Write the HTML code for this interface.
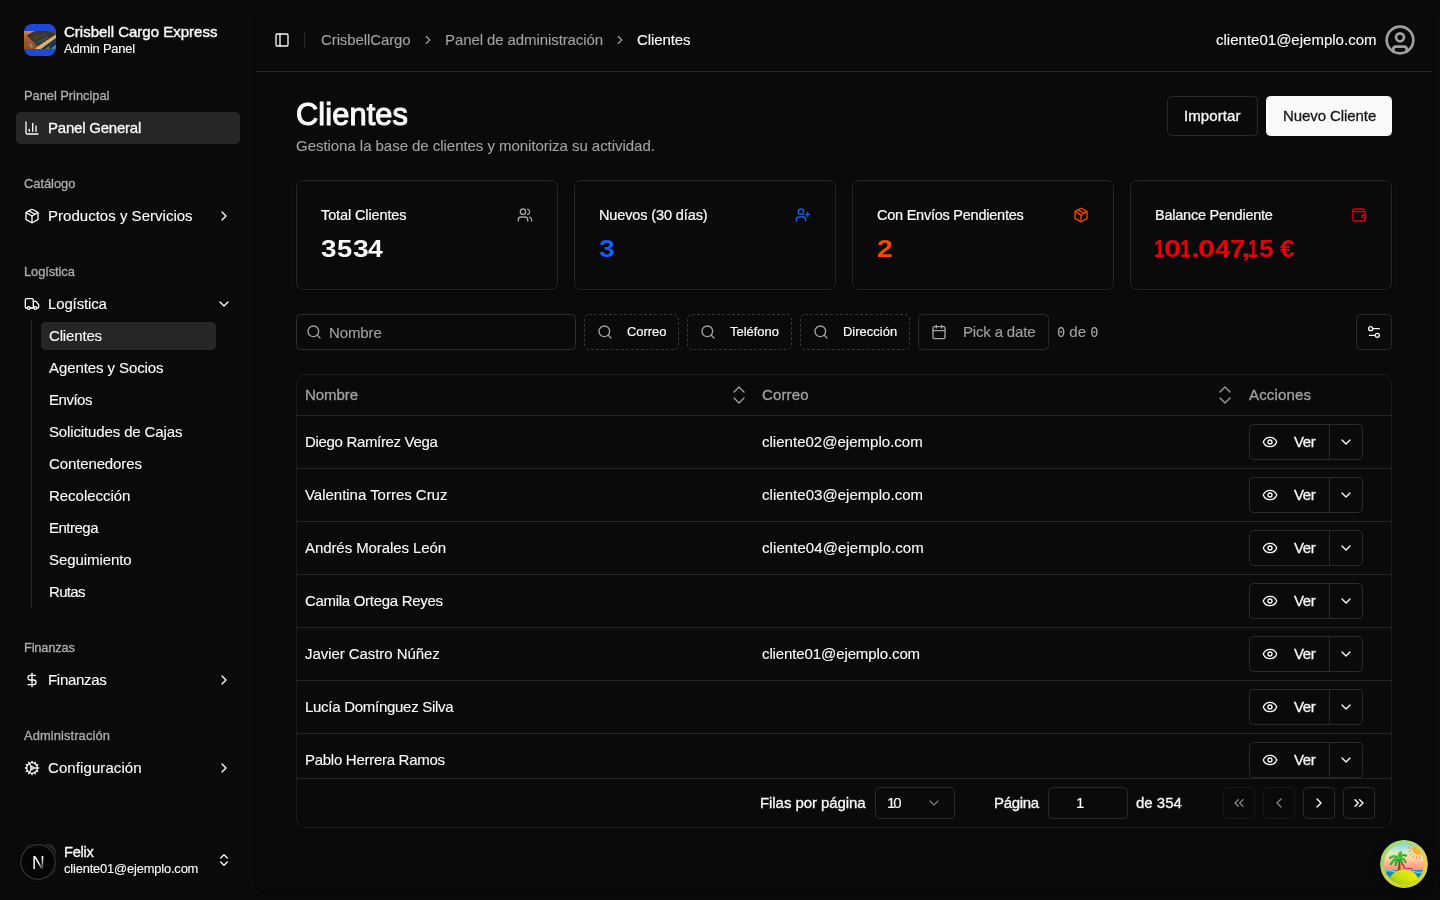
<!DOCTYPE html>
<html lang="es">
<head>
<meta charset="utf-8">
<title>Clientes - Crisbell Cargo Express</title>
<style>
*{box-sizing:border-box;margin:0;padding:0}
html,body{width:1440px;height:900px;overflow:hidden;background:#0a0a0a;color:#fafafa;
  font-family:"Liberation Sans",sans-serif;font-size:15px}
.abs{position:absolute}
.t{position:absolute;white-space:nowrap;line-height:20px;height:20px;will-change:transform;-webkit-text-stroke:.12px}
svg.i{position:absolute;fill:none;stroke:currentColor;stroke-width:2;stroke-linecap:round;stroke-linejoin:round}
#sb{position:absolute;left:0;top:0;width:256px;height:900px;background:#0a0a0a}
.lbl{font-size:12.9px;-webkit-text-stroke:.3px;color:#adadad;left:24px;letter-spacing:0.1px;line-height:16px;height:16px;margin-top:3px}
.it{font-size:15px;left:48px;color:#fafafa;letter-spacing:0.42px}
.sub{font-size:15px;left:49px;color:#fafafa;letter-spacing:0.42px}
#main{position:absolute;left:256px;top:8px;width:1176px;height:884px;background:#0a0a0a;border-radius:11px;
  box-shadow:0 1px 3px rgba(0,0,0,.6),0 0 0 1px rgba(255,255,255,.012)}
.mut{color:#a1a1a1}
.mono{font-family:"DejaVu Sans Mono","Liberation Mono",monospace;font-size:13.6px}
.card{position:absolute;top:180px;width:262px;height:110px;border:1px solid #252525;border-radius:6.400px;background:#0a0a0a;box-shadow:0 1px 2px rgba(0,0,0,.5)}
.btn{position:absolute;border:1px solid #2a2a2a;border-radius:4.500px;background:#0a0a0a}
.dash{border-style:dashed;border-color:#333}
.md{-webkit-text-stroke:.3px;letter-spacing:.4px}
.cv{position:absolute;white-space:nowrap;font-size:24.3px;font-weight:bold;line-height:32px;height:32px;will-change:transform}
.sbd{-webkit-text-stroke:.42px}
</style>
</head>
<body>
<div id="sb"></div>
<div id="main"></div>
<svg class="abs" style="left:24px;top:24px;width:32px;height:32px" viewBox="0 0 32 32">
<defs><clipPath id="lg"><rect width="32" height="32" rx="8"/></clipPath>
<linearGradient id="ph" x1="0" y1="0" x2="0" y2="1"><stop offset="0" stop-color="#c88a4e"/><stop offset=".4" stop-color="#a8602c"/><stop offset="1" stop-color="#8c4a1e"/></linearGradient>
<pattern id="gr" width="2.200" height="2.200" patternUnits="userSpaceOnUse" patternTransform="rotate(32)"><rect width="2.200" height="2.200" fill="#2b2520"/><rect width="1.100" height="1" fill="#46504a"/><rect x="1.100" y="1.100" width="1" height=".8" fill="#6a4a38"/></pattern></defs>
<g clip-path="url(#lg)"><rect width="32" height="32" fill="#1f48d9"/>
<rect y="7" width="32" height="18" fill="url(#ph)"/>
<polygon points="2.700,11.500 10.700,7 32,7 32,11 14,22.400" fill="url(#gr)"/>
<polygon points="8,13 20,8.500 24,10 12,16" fill="#3f6a5c" opacity=".25"/>
<polygon points="13,17.500 23,12.500 25,14 15,19.500" fill="#4f8a78" opacity=".25"/>
<polygon points="24,7 32,7 32,10.500" fill="#7a4528" opacity=".8"/>
<polygon points="11,25 17,25 32,14 32,10.600 14,22.300" fill="#dcae78"/>
<polygon points="17,25 32,14 32,25" fill="#17364f"/>
<polygon points="26.500,25 32,20.500 32,25" fill="#4a7f90"/>
<polygon points="21,25 25,22 26,25" fill="#6a6a45"/>
<polygon points="4.500,20 7,19.500 9,23 7.500,24" fill="#5fa08f"/>
</g></svg>
<div class="t sbd" style="left:64px;top:22px;font-size:15px;;letter-spacing:0.00px">Crisbell Cargo Express</div>
<div class="t " style="left:64px;top:41px;font-size:12.9px;line-height:16px;height:16px;;letter-spacing:-0.20px">Admin Panel</div>
<div class="t lbl" style="top:85px;;letter-spacing:-0.04px">Panel Principal</div>
<div class="abs" style="left:16px;top:112px;width:224px;height:32px;border-radius:4.500px;background:#262626"></div>
<svg class="i" viewBox="0 0 24 24" style="left:24px;top:120px;width:16px;height:16px;"><path d="M3 3v16a2 2 0 0 0 2 2h16"/><path d="M18 17V9"/><path d="M13 17V5"/><path d="M8 17v-3"/></svg>
<div class="t it md" style="top:118px;;letter-spacing:-0.22px">Panel General</div>
<div class="t lbl" style="top:173px;;letter-spacing:-0.04px">Catálogo</div>
<svg class="i" viewBox="0 0 24 24" style="left:24px;top:208px;width:16px;height:16px;"><path d="M11 21.73a2 2 0 0 0 2 0l7-4A2 2 0 0 0 21 16V8a2 2 0 0 0-1-1.73l-7-4a2 2 0 0 0-2 0l-7 4A2 2 0 0 0 3 8v8a2 2 0 0 0 1 1.73z"/><path d="M12 22V12"/><path d="M3.29 7 12 12l8.71-5"/><path d="m7.5 4.27 9 5.15"/></svg>
<div class="t it" style="top:206px;;letter-spacing:0.02px">Productos y Servicios</div>
<svg class="i" viewBox="0 0 24 24" style="left:216px;top:208px;width:16px;height:16px;"><path d="m9 18 6-6-6-6"/></svg>
<div class="t lbl" style="top:261px;;letter-spacing:-0.09px">Logística</div>
<svg class="i" viewBox="0 0 24 24" style="left:24px;top:296px;width:16px;height:16px;"><path d="M14 18V6a2 2 0 0 0-2-2H4a2 2 0 0 0-2 2v11a1 1 0 0 0 1 1h2"/><path d="M15 18H9"/><path d="M19 18h2a1 1 0 0 0 1-1v-3.65a1 1 0 0 0-.22-.624l-3.48-4.35A1 1 0 0 0 17.52 8H14"/><circle cx="17" cy="18" r="2"/><circle cx="7" cy="18" r="2"/></svg>
<div class="t it" style="top:294px;;letter-spacing:-0.14px">Logística</div>
<svg class="i" viewBox="0 0 24 24" style="left:216px;top:296px;width:16px;height:16px;"><path d="m6 9 6 6 6-6"/></svg>
<div class="abs" style="left:31px;top:320px;width:1px;height:288px;background:#262626"></div>
<div class="abs" style="left:41px;top:322px;width:175px;height:28px;border-radius:4.500px;background:#262626"></div>
<div class="t sub" style="top:326px;;letter-spacing:-0.16px">Clientes</div>
<div class="t sub" style="top:358px;;letter-spacing:-0.09px">Agentes y Socios</div>
<div class="t sub" style="top:390px;;letter-spacing:-0.48px">Envíos</div>
<div class="t sub" style="top:422px;;letter-spacing:-0.13px">Solicitudes de Cajas</div>
<div class="t sub" style="top:454px;;letter-spacing:-0.12px">Contenedores</div>
<div class="t sub" style="top:486px;;letter-spacing:-0.03px">Recolección</div>
<div class="t sub" style="top:518px;;letter-spacing:-0.50px">Entrega</div>
<div class="t sub" style="top:550px;;letter-spacing:-0.08px">Seguimiento</div>
<div class="t sub" style="top:582px;;letter-spacing:-0.69px">Rutas</div>
<div class="t lbl" style="top:637px;;letter-spacing:-0.20px">Finanzas</div>
<svg class="i" viewBox="0 0 24 24" style="left:24px;top:672px;width:16px;height:16px;"><path d="M12 2v20"/><path d="M17 5H9.5a3.5 3.5 0 0 0 0 7h5a3.5 3.5 0 0 1 0 7H6"/></svg>
<div class="t it" style="top:670px;;letter-spacing:-0.29px">Finanzas</div>
<svg class="i" viewBox="0 0 24 24" style="left:216px;top:672px;width:16px;height:16px;"><path d="m9 18 6-6-6-6"/></svg>
<div class="t lbl" style="top:725px;;letter-spacing:0.10px">Administración</div>
<svg class="i" viewBox="0 0 24 24" style="left:24px;top:760px;width:16px;height:16px;"><path d="M12 20a8 8 0 1 0 0-16 8 8 0 0 0 0 16Z"/><path d="M12 14a2 2 0 1 0 0-4 2 2 0 0 0 0 4Z"/><path d="M12 2v2"/><path d="M12 22v-2"/><path d="m17 20.66-1-1.73"/><path d="M11 10.27 7 3.34"/><path d="m20.66 17-1.73-1"/><path d="m3.34 7 1.73 1"/><path d="M14 12h8"/><path d="M2 12h2"/><path d="m20.66 7-1.73 1"/><path d="m3.34 17 1.73-1"/><path d="m17 3.34-1 1.73"/><path d="m11 13.73-4 6.93"/></svg>
<div class="t it" style="top:758px;;letter-spacing:0.09px">Configuración</div>
<svg class="i" viewBox="0 0 24 24" style="left:216px;top:760px;width:16px;height:16px;"><path d="m9 18 6-6-6-6"/></svg>
<div class="abs" style="left:24px;top:844px;width:32px;height:32px;border-radius:8px;background:#262626"></div>
<div class="abs" style="left:20px;top:844px;width:36px;height:36px;border-radius:50%;background:#050505;box-shadow:inset 0 0 0 1.500px #2e2e2e,0 0 0 1px rgba(0,0,0,.6)"></div>
<div class="t " style="left:31.5px;top:852.5px;font-size:17.5px;letter-spacing:0;background:linear-gradient(125deg,#fff 50%,rgba(255,255,255,.1) 82%);-webkit-background-clip:text;background-clip:text;color:transparent">N</div>
<div class="t sbd" style="left:64px;top:842px;font-size:14.6px;-webkit-text-stroke-width:.33px;;letter-spacing:-0.28px">Felix</div>
<div class="t " style="left:64px;top:861px;font-size:12.9px;line-height:16px;height:16px;;letter-spacing:-0.17px">cliente01@ejemplo.com</div>
<svg class="i" viewBox="0 0 24 24" style="left:216px;top:852px;width:16px;height:16px;"><path d="m7 15 5 5 5-5"/><path d="m7 9 5-5 5 5"/></svg>
<div class="abs" style="left:256px;top:71px;width:1176px;height:1px;background:#262626"></div>
<svg class="i" viewBox="0 0 24 24" style="left:274px;top:32px;width:16px;height:16px;"><rect width="18" height="18" x="3" y="3" rx="2"/><path d="M9 3v18"/></svg>
<div class="abs" style="left:304px;top:32px;width:1px;height:16px;background:#262626"></div>
<div class="t mut" style="left:321px;top:30px;;letter-spacing:-0.10px">CrisbellCargo</div>
<svg class="i" viewBox="0 0 24 24" style="left:421px;top:33px;width:14px;height:14px;color:#a1a1a1;"><path d="m9 18 6-6-6-6"/></svg>
<div class="t mut" style="left:445px;top:30px;;letter-spacing:-0.09px">Panel de administración</div>
<svg class="i" viewBox="0 0 24 24" style="left:613px;top:33px;width:14px;height:14px;color:#a1a1a1;"><path d="m9 18 6-6-6-6"/></svg>
<div class="t " style="left:637px;top:30px;;letter-spacing:-0.11px">Clientes</div>
<div class="t " style="left:1216px;top:30px;;letter-spacing:0.01px">cliente01@ejemplo.com</div>
<svg class="i" viewBox="0 0 24 24" style="left:1384px;top:24px;width:32px;height:32px;color:#a1a1a1;"><circle cx="12" cy="12" r="10"/><circle cx="12" cy="10" r="3"/><path d="M7 20.662V19a2 2 0 0 1 2-2h6a2 2 0 0 1 2 2v1.662"/></svg>
<div class="t " style="left:296px;top:97px;font-size:30.8px;-webkit-text-stroke:1.05px;line-height:36px;height:36px;;letter-spacing:0.09px">Clientes</div>
<div class="t mut" style="left:296px;top:136px;;letter-spacing:-0.04px">Gestiona la base de clientes y monitoriza su actividad.</div>
<div class="btn" style="left:1167px;top:96px;width:91px;height:40px"></div>
<div class="t md" style="left:1184px;top:106px;;letter-spacing:0.09px">Importar</div>
<div class="btn" style="left:1266px;top:96px;width:126px;height:40px;background:#fafafa;border-color:#fafafa"></div>
<div class="t md" style="left:1283px;top:106px;color:#171717;letter-spacing:-0.08px">Nuevo Cliente</div>
<div class="card" style="left:296px"></div>
<div class="t md" style="left:321px;top:205px;font-size:14.5px;-webkit-text-stroke-width:.22px;letter-spacing:-0.12px">Total Clientes</div>
<svg class="i" viewBox="0 0 24 24" style="left:517px;top:207px;width:16px;height:16px;color:#a1a1a1;"><path d="M16 21v-2a4 4 0 0 0-4-4H6a4 4 0 0 0-4 4v2"/><circle cx="9" cy="7" r="4"/><path d="M22 21v-2a4 4 0 0 0-3-3.87"/><path d="M16 3.13a4 4 0 0 1 0 7.75"/></svg>
<div class="cv" aria-label="3534" style="left:320.90px;top:233px;color:#fafafa;font-size:24.4px"><span style="display:inline-block;width:16.17px;transform:scaleX(1.143);transform-origin:0 50%">3</span><span style="display:inline-block;width:15.46px;transform:scaleX(1.123);transform-origin:0 50%">5</span><span style="display:inline-block;width:15.16px;transform:scaleX(1.159);transform-origin:0 50%">3</span><span style="display:inline-block;width:20.00px;transform:scaleX(1.084);transform-origin:0 50%">4</span></div>
<div class="card" style="left:574px"></div>
<div class="t md" style="left:599px;top:205px;font-size:14.5px;-webkit-text-stroke-width:.22px;letter-spacing:-0.12px">Nuevos (30 días)</div>
<svg class="i" viewBox="0 0 24 24" style="left:795px;top:207px;width:16px;height:16px;color:#155dfc;"><path d="M16 21v-2a4 4 0 0 0-4-4H6a4 4 0 0 0-4 4v2"/><circle cx="9" cy="7" r="4"/><path d="M19 8v6"/><path d="M22 11h-6"/></svg>
<div class="cv" aria-label="3" style="left:598.89px;top:233px;color:#155dfc;font-size:24.4px"><span style="display:inline-block;width:20.00px;transform:scaleX(1.167);transform-origin:0 50%">3</span></div>
<div class="card" style="left:852px"></div>
<div class="t md" style="left:877px;top:205px;font-size:14.5px;-webkit-text-stroke-width:.22px;letter-spacing:-0.24px">Con Envíos Pendientes</div>
<svg class="i" viewBox="0 0 24 24" style="left:1073px;top:207px;width:16px;height:16px;color:#f54900;"><path d="M11 21.73a2 2 0 0 0 2 0l7-4A2 2 0 0 0 21 16V8a2 2 0 0 0-1-1.73l-7-4a2 2 0 0 0-2 0l-7 4A2 2 0 0 0 3 8v8a2 2 0 0 0 1 1.73z"/><path d="M12 22V12"/><path d="M3.29 7 12 12l8.71-5"/><path d="m7.5 4.27 9 5.15"/></svg>
<div class="cv" aria-label="2" style="left:876.60px;top:233px;color:#f54900;font-size:24.4px"><span style="display:inline-block;width:20.00px;transform:scaleX(1.170);transform-origin:0 50%">2</span></div>
<div class="card" style="left:1130px"></div>
<div class="t md" style="left:1155px;top:205px;font-size:14.5px;-webkit-text-stroke-width:.22px;letter-spacing:-0.24px">Balance Pendiente</div>
<svg class="i" viewBox="0 0 24 24" style="left:1351px;top:207px;width:16px;height:16px;color:#e7000b;"><path d="M19 7V4a1 1 0 0 0-1-1H5a2 2 0 0 0 0 4h15a1 1 0 0 1 1 1v4h-3a2 2 0 0 0 0 4h3a1 1 0 0 0 1-1v-2a1 1 0 0 0-1-1"/><path d="M3 5v14a2 2 0 0 0 2 2h15a1 1 0 0 0 1-1v-4"/></svg>
<div class="cv" aria-label="101.047,15 €" style="left:1154.37px;top:233px;color:#e7000b;font-size:24.4px"><span style="display:inline-block;width:10.19px;transform:scaleX(0.776);transform-origin:0 50%">1</span><span style="display:inline-block;width:15.98px;transform:scaleX(1.268);transform-origin:0 50%">0</span><span style="display:inline-block;width:10.86px;transform:scaleX(0.793);transform-origin:0 50%">1</span><span style="display:inline-block;width:7.16px;transform:scaleX(1.347);transform-origin:0 50%">.</span><span style="display:inline-block;width:17.12px;transform:scaleX(1.268);transform-origin:0 50%">0</span><span style="display:inline-block;width:14.97px;transform:scaleX(1.134);transform-origin:0 50%">4</span><span style="display:inline-block;width:10.65px;transform:scaleX(1.137);transform-origin:0 50%">7</span><span style="display:inline-block;width:6.63px;transform:scaleX(1.464);transform-origin:0 50%">,</span><span style="display:inline-block;width:11.48px;transform:scaleX(0.740);transform-origin:0 50%">1</span><span style="display:inline-block;width:14.79px;transform:scaleX(1.090);transform-origin:0 50%">5</span><span style="display:inline-block;width:6.47px;transform:scaleX(1.000);transform-origin:0 50%">&nbsp;</span><span style="display:inline-block;width:20.00px;transform:scaleX(1.103);transform-origin:0 50%">€</span></div>
<div class="btn" style="left:296px;top:314px;width:280px;height:36px;border-color:#2e2e2e"></div>
<svg class="i" viewBox="0 0 24 24" style="left:306px;top:324px;width:16px;height:16px;color:#a1a1a1;"><circle cx="11" cy="11" r="8"/><path d="m21 21-4.3-4.3"/></svg>
<div class="t mut" style="left:329px;top:323px;;letter-spacing:-0.10px">Nombre</div>
<svg class="abs" style="left:584px;top:314px;width:95px;height:36px" viewBox="0 0 95 36"><rect x=".5" y=".5" width="94" height="35" rx="4.500" fill="none" stroke="#363636" stroke-dasharray="3 2"/></svg>
<svg class="i" viewBox="0 0 24 24" style="left:597px;top:324px;width:16px;height:16px;color:#a1a1a1;"><circle cx="11" cy="11" r="8"/><path d="m21 21-4.3-4.3"/></svg>
<div class="t md" style="left:627px;top:322px;font-size:12.9px;-webkit-text-stroke-width:.2px;letter-spacing:0.00px">Correo</div>
<svg class="abs" style="left:687px;top:314px;width:105px;height:36px" viewBox="0 0 105 36"><rect x=".5" y=".5" width="104" height="35" rx="4.500" fill="none" stroke="#363636" stroke-dasharray="3 2"/></svg>
<svg class="i" viewBox="0 0 24 24" style="left:700px;top:324px;width:16px;height:16px;color:#a1a1a1;"><circle cx="11" cy="11" r="8"/><path d="m21 21-4.3-4.3"/></svg>
<div class="t md" style="left:730px;top:322px;font-size:12.9px;-webkit-text-stroke-width:.2px;letter-spacing:0.01px">Teléfono</div>
<svg class="abs" style="left:800px;top:314px;width:110px;height:36px" viewBox="0 0 110 36"><rect x=".5" y=".5" width="109" height="35" rx="4.500" fill="none" stroke="#363636" stroke-dasharray="3 2"/></svg>
<svg class="i" viewBox="0 0 24 24" style="left:813px;top:324px;width:16px;height:16px;color:#a1a1a1;"><circle cx="11" cy="11" r="8"/><path d="m21 21-4.3-4.3"/></svg>
<div class="t md" style="left:843px;top:322px;font-size:12.9px;-webkit-text-stroke-width:.2px;letter-spacing:0.04px">Dirección</div>
<div class="btn" style="left:918px;top:314px;width:131px;height:36px"></div>
<svg class="i" viewBox="0 0 24 24" style="left:931px;top:324px;width:16px;height:16px;color:#a1a1a1;"><path d="M8 2v4"/><path d="M16 2v4"/><rect width="18" height="18" x="3" y="4" rx="2"/><path d="M3 10h18"/></svg>
<div class="t mut" style="left:963px;top:322px;;letter-spacing:-0.17px">Pick a date</div>
<div class="t mut" style="left:1057px;top:322px;"><span class="mono">0</span> de <span class="mono">0</span></div>
<div class="btn" style="left:1356px;top:314px;width:36px;height:36px"></div>
<svg class="i" viewBox="0 0 24 24" style="left:1366px;top:324px;width:16px;height:16px;"><path d="M20 7h-9"/><path d="M14 17H5"/><circle cx="17" cy="17" r="3"/><circle cx="7" cy="7" r="3"/></svg>
<div class="abs" style="left:296px;top:374px;width:1096px;height:454px;border:1px solid #1d1d1d;border-radius:10px"></div>
<div class="t mut md" style="left:305px;top:385px;;letter-spacing:-0.05px">Nombre</div>
<div class="t mut md" style="left:762px;top:385px;;letter-spacing:0.15px">Correo</div>
<div class="t mut md" style="left:1249px;top:385px;;letter-spacing:0.17px">Acciones</div>
<svg class="i" viewBox="0 0 24 24" style="left:727px;top:383px;width:24px;height:24px;color:#a1a1a1;stroke-width:1.3;"><path d="m7 15 5 5 5-5"/><path d="m7 9 5-5 5 5"/></svg>
<svg class="i" viewBox="0 0 24 24" style="left:1213px;top:383px;width:24px;height:24px;color:#a1a1a1;stroke-width:1.3;"><path d="m7 15 5 5 5-5"/><path d="m7 9 5-5 5 5"/></svg>
<div class="abs" style="left:297px;top:415px;width:1094px;height:1px;background:#242424"></div>
<div class="t " style="left:305px;top:432px;;letter-spacing:-0.33px">Diego Ramírez Vega</div>
<div class="t " style="left:762px;top:432px;;letter-spacing:0.02px">cliente02@ejemplo.com</div>
<div class="btn" style="left:1249px;top:424px;width:81px;height:36px;border-radius:4.500px 0 0 4.500px;"></div>
<div class="btn" style="left:1329px;top:424px;width:34px;height:36px;border-radius:0 4.500px 4.500px 0;"></div>
<svg class="i" viewBox="0 0 24 24" style="left:1262px;top:434px;width:16px;height:16px;"><path d="M2.062 12.348a1 1 0 0 1 0-.696 10.75 10.75 0 0 1 19.876 0 1 1 0 0 1 0 .696 10.75 10.75 0 0 1-19.876 0"/><circle cx="12" cy="12" r="3"/></svg>
<div class="t md" style="left:1294px;top:432px;;letter-spacing:-0.35px">Ver</div>
<svg class="i" viewBox="0 0 24 24" style="left:1338px;top:434px;width:16px;height:16px;"><path d="m6 9 6 6 6-6"/></svg>
<div class="abs" style="left:297px;top:468px;width:1094px;height:1px;background:#242424"></div>
<div class="t " style="left:305px;top:485px;;letter-spacing:-0.02px">Valentina Torres Cruz</div>
<div class="t " style="left:762px;top:485px;;letter-spacing:0.04px">cliente03@ejemplo.com</div>
<div class="btn" style="left:1249px;top:477px;width:81px;height:36px;border-radius:4.500px 0 0 4.500px;"></div>
<div class="btn" style="left:1329px;top:477px;width:34px;height:36px;border-radius:0 4.500px 4.500px 0;"></div>
<svg class="i" viewBox="0 0 24 24" style="left:1262px;top:487px;width:16px;height:16px;"><path d="M2.062 12.348a1 1 0 0 1 0-.696 10.75 10.75 0 0 1 19.876 0 1 1 0 0 1 0 .696 10.75 10.75 0 0 1-19.876 0"/><circle cx="12" cy="12" r="3"/></svg>
<div class="t md" style="left:1294px;top:485px;;letter-spacing:-0.35px">Ver</div>
<svg class="i" viewBox="0 0 24 24" style="left:1338px;top:487px;width:16px;height:16px;"><path d="m6 9 6 6 6-6"/></svg>
<div class="abs" style="left:297px;top:521px;width:1094px;height:1px;background:#242424"></div>
<div class="t " style="left:305px;top:538px;;letter-spacing:-0.08px">Andrés Morales León</div>
<div class="t " style="left:762px;top:538px;;letter-spacing:0.07px">cliente04@ejemplo.com</div>
<div class="btn" style="left:1249px;top:530px;width:81px;height:36px;border-radius:4.500px 0 0 4.500px;"></div>
<div class="btn" style="left:1329px;top:530px;width:34px;height:36px;border-radius:0 4.500px 4.500px 0;"></div>
<svg class="i" viewBox="0 0 24 24" style="left:1262px;top:540px;width:16px;height:16px;"><path d="M2.062 12.348a1 1 0 0 1 0-.696 10.75 10.75 0 0 1 19.876 0 1 1 0 0 1 0 .696 10.75 10.75 0 0 1-19.876 0"/><circle cx="12" cy="12" r="3"/></svg>
<div class="t md" style="left:1294px;top:538px;;letter-spacing:-0.35px">Ver</div>
<svg class="i" viewBox="0 0 24 24" style="left:1338px;top:540px;width:16px;height:16px;"><path d="m6 9 6 6 6-6"/></svg>
<div class="abs" style="left:297px;top:574px;width:1094px;height:1px;background:#242424"></div>
<div class="t " style="left:305px;top:591px;;letter-spacing:-0.30px">Camila Ortega Reyes</div>
<div class="btn" style="left:1249px;top:583px;width:81px;height:36px;border-radius:4.500px 0 0 4.500px;"></div>
<div class="btn" style="left:1329px;top:583px;width:34px;height:36px;border-radius:0 4.500px 4.500px 0;"></div>
<svg class="i" viewBox="0 0 24 24" style="left:1262px;top:593px;width:16px;height:16px;"><path d="M2.062 12.348a1 1 0 0 1 0-.696 10.75 10.75 0 0 1 19.876 0 1 1 0 0 1 0 .696 10.75 10.75 0 0 1-19.876 0"/><circle cx="12" cy="12" r="3"/></svg>
<div class="t md" style="left:1294px;top:591px;;letter-spacing:-0.35px">Ver</div>
<svg class="i" viewBox="0 0 24 24" style="left:1338px;top:593px;width:16px;height:16px;"><path d="m6 9 6 6 6-6"/></svg>
<div class="abs" style="left:297px;top:627px;width:1094px;height:1px;background:#242424"></div>
<div class="t " style="left:305px;top:644px;;letter-spacing:-0.06px">Javier Castro Núñez</div>
<div class="t " style="left:762px;top:644px;;letter-spacing:-0.11px">cliente01@ejemplo.com</div>
<div class="btn" style="left:1249px;top:636px;width:81px;height:36px;border-radius:4.500px 0 0 4.500px;"></div>
<div class="btn" style="left:1329px;top:636px;width:34px;height:36px;border-radius:0 4.500px 4.500px 0;"></div>
<svg class="i" viewBox="0 0 24 24" style="left:1262px;top:646px;width:16px;height:16px;"><path d="M2.062 12.348a1 1 0 0 1 0-.696 10.75 10.75 0 0 1 19.876 0 1 1 0 0 1 0 .696 10.75 10.75 0 0 1-19.876 0"/><circle cx="12" cy="12" r="3"/></svg>
<div class="t md" style="left:1294px;top:644px;;letter-spacing:-0.35px">Ver</div>
<svg class="i" viewBox="0 0 24 24" style="left:1338px;top:646px;width:16px;height:16px;"><path d="m6 9 6 6 6-6"/></svg>
<div class="abs" style="left:297px;top:680px;width:1094px;height:1px;background:#242424"></div>
<div class="t " style="left:305px;top:697px;;letter-spacing:-0.28px">Lucía Domínguez Silva</div>
<div class="btn" style="left:1249px;top:689px;width:81px;height:36px;border-radius:4.500px 0 0 4.500px;"></div>
<div class="btn" style="left:1329px;top:689px;width:34px;height:36px;border-radius:0 4.500px 4.500px 0;"></div>
<svg class="i" viewBox="0 0 24 24" style="left:1262px;top:699px;width:16px;height:16px;"><path d="M2.062 12.348a1 1 0 0 1 0-.696 10.75 10.75 0 0 1 19.876 0 1 1 0 0 1 0 .696 10.75 10.75 0 0 1-19.876 0"/><circle cx="12" cy="12" r="3"/></svg>
<div class="t md" style="left:1294px;top:697px;;letter-spacing:-0.35px">Ver</div>
<svg class="i" viewBox="0 0 24 24" style="left:1338px;top:699px;width:16px;height:16px;"><path d="m6 9 6 6 6-6"/></svg>
<div class="abs" style="left:297px;top:733px;width:1094px;height:1px;background:#242424"></div>
<div class="t " style="left:305px;top:750px;;letter-spacing:-0.28px">Pablo Herrera Ramos</div>
<div class="btn" style="left:1249px;top:742px;width:81px;height:36px;border-radius:4.500px 0 0 4.500px;"></div>
<div class="btn" style="left:1329px;top:742px;width:34px;height:36px;border-radius:0 4.500px 4.500px 0;"></div>
<svg class="i" viewBox="0 0 24 24" style="left:1262px;top:752px;width:16px;height:16px;"><path d="M2.062 12.348a1 1 0 0 1 0-.696 10.75 10.75 0 0 1 19.876 0 1 1 0 0 1 0 .696 10.75 10.75 0 0 1-19.876 0"/><circle cx="12" cy="12" r="3"/></svg>
<div class="t md" style="left:1294px;top:750px;;letter-spacing:-0.35px">Ver</div>
<svg class="i" viewBox="0 0 24 24" style="left:1338px;top:752px;width:16px;height:16px;"><path d="m6 9 6 6 6-6"/></svg>
<div class="abs" style="left:297px;top:778px;width:1094px;height:49px;background:#0a0a0a;border-top:1px solid #242424;border-radius:0 0 9px 9px"></div>
<div class="t md" style="left:760px;top:793px;;letter-spacing:-0.07px">Filas por página</div>
<div class="btn" style="left:875px;top:787px;width:80px;height:32px"></div>
<div class="t " style="left:887px;top:793px;;letter-spacing:-2.20px">10</div>
<svg class="i" viewBox="0 0 24 24" style="left:926px;top:795px;width:16px;height:16px;color:#737373;"><path d="m6 9 6 6 6-6"/></svg>
<div class="t md" style="left:994px;top:793px;;letter-spacing:-0.30px">Página</div>
<div class="btn" style="left:1048px;top:787px;width:80px;height:32px"></div>
<div class="t " style="left:1076px;top:793px;">1</div>
<div class="t md" style="left:1136px;top:793px;;letter-spacing:0.00px">de 354</div>
<div class="btn" style="left:1223px;top:787px;width:32px;height:32px;opacity:.5;"></div>
<svg class="i" viewBox="0 0 24 24" style="left:1231px;top:795px;width:16px;height:16px;opacity:.5;"><path d="m11 17-5-5 5-5"/><path d="m18 17-5-5 5-5"/></svg>
<div class="btn" style="left:1263px;top:787px;width:32px;height:32px;opacity:.5;"></div>
<svg class="i" viewBox="0 0 24 24" style="left:1271px;top:795px;width:16px;height:16px;opacity:.5;"><path d="m15 18-6-6 6-6"/></svg>
<div class="btn" style="left:1303px;top:787px;width:32px;height:32px;"></div>
<svg class="i" viewBox="0 0 24 24" style="left:1311px;top:795px;width:16px;height:16px;"><path d="m9 18 6-6-6-6"/></svg>
<div class="btn" style="left:1343px;top:787px;width:32px;height:32px;"></div>
<svg class="i" viewBox="0 0 24 24" style="left:1351px;top:795px;width:16px;height:16px;"><path d="m6 17 5-5-5-5"/><path d="m13 17 5-5-5-5"/></svg>
<svg class="abs" style="left:1380px;top:840px;width:48px;height:48px;border-radius:50%;box-shadow:0 2px 8px rgba(0,0,0,.5)" viewBox="0 0 48 48">
<defs>
<linearGradient id="rg" x1="0" y1="0" x2="1" y2="1"><stop offset="0" stop-color="#7ed957"/><stop offset=".35" stop-color="#a6d66a"/><stop offset=".6" stop-color="#f1c65c"/><stop offset="1" stop-color="#cfe020"/></linearGradient>
<linearGradient id="rg2" x1="0" y1="0" x2="0" y2="1"><stop offset="0" stop-color="#9ee08a" stop-opacity=".9"/><stop offset=".5" stop-color="#e8c668" stop-opacity="0"/><stop offset="1" stop-color="#c4dc10"/></linearGradient>
<linearGradient id="sky" x1="0" y1="0" x2="0" y2="1"><stop offset="0" stop-color="#7fd6ff"/><stop offset=".3" stop-color="#d9efc0"/><stop offset=".55" stop-color="#ffd3a0"/><stop offset="1" stop-color="#ff8878"/></linearGradient>
<linearGradient id="isl" x1="1" y1="0" x2="0" y2="1"><stop offset="0" stop-color="#fff200"/><stop offset=".5" stop-color="#c9dc10"/><stop offset="1" stop-color="#5fa81a"/></linearGradient>
<clipPath id="inn"><circle cx="24" cy="24" r="20"/></clipPath>
</defs>
<circle cx="24" cy="24" r="24" fill="url(#rg)"/>
<circle cx="24" cy="24" r="24" fill="url(#rg2)"/>
<g clip-path="url(#inn)">
<rect x="4" y="4" width="40" height="27" fill="url(#sky)"/>
<rect x="4" y="30" width="40" height="14" fill="#1f8fb8"/>
<path d="M4 31.5q5-2 10 0t10 0 10 0 10 0" stroke="#5fd0e0" stroke-width="1.4" fill="none"/>
<path d="M4 34.5q5-2 10 0t10 0 10 0 10 0" stroke="#157aa5" stroke-width="1.4" fill="none"/>
<circle cx="38.5" cy="8.5" r="6.3" fill="#ffb01f"/>
<g stroke="#ff8a3c" stroke-width="1" stroke-linecap="round"><path d="M30.5 8.2l-2.2-.3"/><path d="M30.8 11l-2 .7"/><path d="M32 13.6l-1.6 1.4"/><path d="M34 15.6l-1 1.8"/><path d="M36.6 16.6l-.4 2"/><path d="M39.4 16.8l.3 2"/><path d="M31 5.5l-2-.8"/></g>
<path d="M18.2 18c.3 4 .2 8-.9 12.5h3.2c.4-4.500-.2-8.500-1.200-12.500z" fill="#8a4b22"/>
<g fill="none" stroke="#2aa52f" stroke-width="2.300" stroke-linecap="round"><path d="M18.500 18.500Q14 14.500 10 18"/><path d="M18.500 18.500Q13.500 18.500 11 24"/><path d="M18.500 18.500Q16 21 15.500 25"/><path d="M18.500 18.500Q22 13.500 26 15.500"/><path d="M18.500 18.500Q24 17.500 25.500 22"/><path d="M18.500 18.500Q21.500 20.500 22.500 24.500"/><path d="M18.500 18.500Q18 14.500 21 12.500"/></g>
<g fill="none" stroke="#5fd24e" stroke-width=".9" stroke-linecap="round"><path d="M18.500 18Q14 14 10.500 17"/><path d="M18.500 18Q22 13 25.500 14.800"/><path d="M18.300 18Q18 14.500 20.600 12.300"/><path d="M18 18.500Q13.500 18.500 11.500 22.500"/><path d="M19 18.500Q23.500 17.500 25 21"/></g>
<path d="M22.500 24.500l3 4h6.200v2" stroke="#e8207a" stroke-width="1.100" fill="none"/><path d="M22.500 24.300l1.800 2.300" stroke="#ff2a2a" stroke-width="1.300"/><path d="M23 30l1.200-3.500" stroke="#7a4a8a" stroke-width=".8"/>
<ellipse cx="24" cy="41.500" rx="14.500" ry="12" fill="url(#isl)"/>
</g></svg>
</body>
</html>
